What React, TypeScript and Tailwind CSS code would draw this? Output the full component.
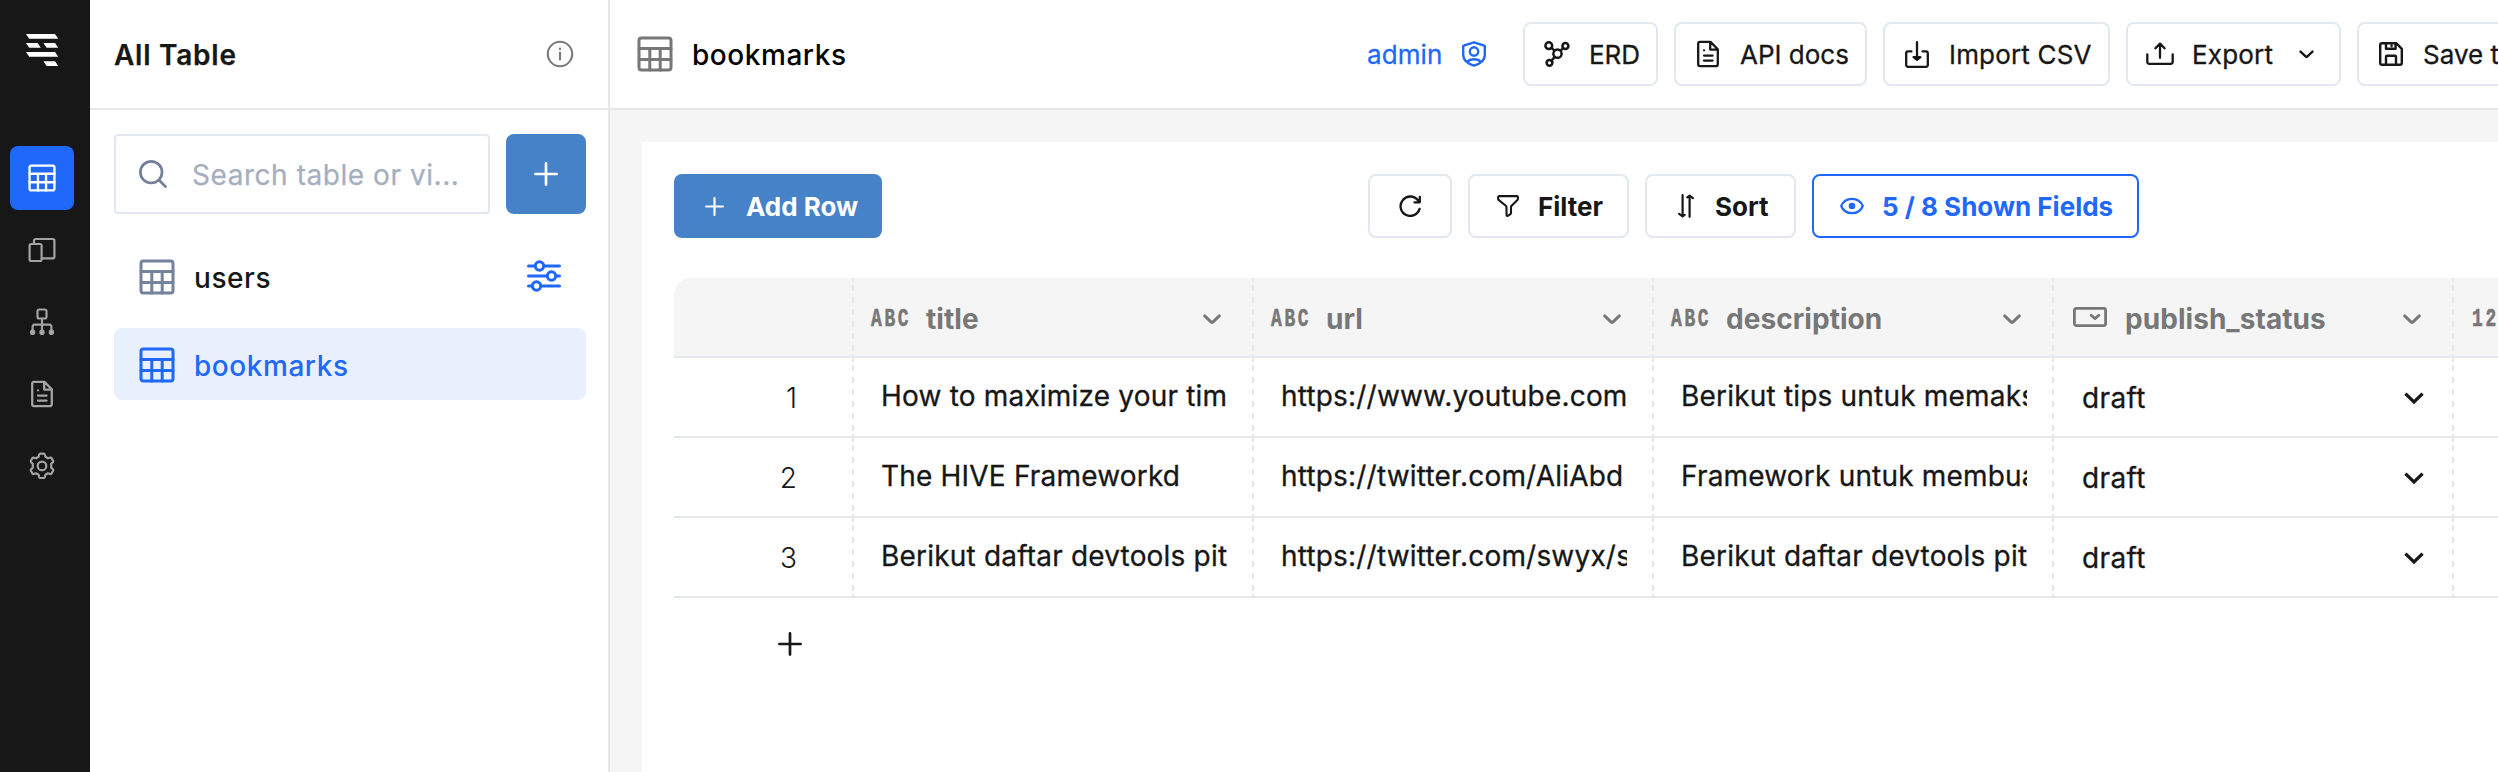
import type { ReactNode } from "react";

type IconProps = { className?: string };

const stroke = { fill: "none", stroke: "currentColor", strokeLinecap: "round", strokeLinejoin: "round" } as const;

const LogoIcon = () => (
  <svg className="h-8 w-[33px]" viewBox="0 0 33 32" fill="#fff">
    <path d="M0 0h29l3.2 4.8H3.2zM0 9h11.6l3.2 4.8H3.2zM17.4 9H29l3.2 4.8H20.6zM0 18h29l3.2 4.8H3.2zM17.4 27.2H29l3.2 4.8H20.6z" />
  </svg>
);

const TableIcon = ({ className }: IconProps) => (
  <svg className={className} viewBox="0 0 36 36" {...stroke} strokeWidth="3">
    <rect x="2" y="2" width="32" height="32" rx="2.5" />
    <path d="M2 12.5h32M2 23.5h32M12.8 12.5V34M23.2 12.5V34" />
  </svg>
);

const DevicesIcon = ({ className }: IconProps) => (
  <svg className={className} viewBox="0 0 28 28" {...stroke} strokeWidth="2.2">
    <rect x="1.6" y="8" width="12" height="17" rx="1.8" />
    <path d="M6 8V4.7A1.7 1.7 0 0 1 7.7 3h17a1.7 1.7 0 0 1 1.7 1.7v16a1.7 1.7 0 0 1-1.7 1.7H14" />
  </svg>
);

const TreeIcon = ({ className }: IconProps) => (
  <svg className={className} viewBox="0 0 28 28" {...stroke} strokeWidth="2.2">
    <rect x="9.5" y="1.5" width="9" height="9" rx="1.8" />
    <path d="M14 10.5v13M4.600 23.500v-5a1.800 1.800 0 0 1 1.800-1.800h15.200a1.800 1.800 0 0 1 1.800 1.800v5" />
    <ellipse cx="4.6" cy="24.3" rx="1.6" ry="1.7" fill="currentColor" />
    <ellipse cx="14" cy="24.3" rx="1.6" ry="1.7" fill="currentColor" />
    <ellipse cx="23.4" cy="24.3" rx="1.6" ry="1.7" fill="currentColor" />
  </svg>
);

const DocIcon = ({ className }: IconProps) => (
  <svg className={className} viewBox="0 0 28 28" {...stroke} strokeWidth="2.3">
    <path d="M16.5 1.9H6a1.8 1.8 0 0 0-1.8 1.8v20.6A1.8 1.8 0 0 0 6 26.1h16a1.8 1.8 0 0 0 1.8-1.8V9.200zM16.2 2.400v7.200h7.300M10 20.600h8.600M10 15.600h8.600M10 10.300h.1" />
  </svg>
);

const GearIcon = ({ className }: IconProps) => (
  <svg className={className} viewBox="0 0 28 28" {...stroke} strokeWidth="2.2">
    <path d="M12.400 1.600h3.200c.7 0 1 .3 1.200.9l.6 2.300 2.500 1.500 2.300-.7c.6-.2 1.100 0 1.400.5l1.500 2.600c.3.600.3 1.100-.2 1.500l-1.700 1.700v3.700l1.700 1.700c.5.500.5 1 .2 1.500l-1.500 2.600c-.3.600-.8.700-1.400.6l-2.300-.7-2.500 1.400-.6 2.400c-.2.600-.5.900-1.200.9h-3.200c-.7 0-1-.3-1.200-.9l-.6-2.400-2.500-1.400-2.300.7c-.6.100-1.100 0-1.400-.6l-1.500-2.600c-.3-.5-.3-1 .2-1.500l1.700-1.700v-3.700l-1.700-1.700c-.5-.4-.5-.9-.2-1.500l1.500-2.600c.3-.5.8-.7 1.400-.5l2.300.7 2.500-1.500.6-2.300c.2-.6.5-.9 1.200-.9z" />
    <circle cx="14" cy="13.9" r="4.3" />
  </svg>
);

const InfoIcon = ({ className }: IconProps) => (
  <svg className={className} viewBox="0 0 28 28" {...stroke} strokeWidth="2.1">
    <circle cx="14" cy="14" r="12.2" />
    <path d="M14 12.5v7" />
    <circle cx="14" cy="8.7" r=".6" fill="currentColor" strokeWidth="1.2" />
  </svg>
);

const SearchIcon = ({ className }: IconProps) => (
  <svg className={className} viewBox="0 0 28 28" {...stroke} strokeWidth="2.7">
    <circle cx="12.2" cy="12.2" r="10.8" />
    <path d="M20.2 20.2l6.3 6.400" />
  </svg>
);

const PlusIcon = ({ className }: IconProps) => (
  <svg className={className} viewBox="0 0 24 24" {...stroke} strokeWidth="2.7">
    <path d="M12 1.400v21.200M1.400 12h21.200" />
  </svg>
);

const SlidersIcon = ({ className }: IconProps) => (
  <svg className={className} viewBox="0 0 34 32" {...stroke} strokeWidth="3">
    <path d="M1.500 6H8M17 6h15.500M1.500 16H20M29 16h3.500M1.500 26H5M14 26h18.500" />
    <circle cx="12.500" cy="6" r="4.2" />
    <circle cx="24.500" cy="16" r="4.2" />
    <circle cx="9.500" cy="26" r="4.2" />
  </svg>
);

const ShieldIcon = ({ className }: IconProps) => (
  <svg className={className} viewBox="0 0 24 26" {...stroke} strokeWidth="2.4">
    <path d="M12 1.300L22.300 4.700a.7.700 0 0 1 .5.700V14c0 5.500-5 8.800-10.800 10.700C6.200 22.800 1.200 19.500 1.200 14V5.400a.7.700 0 0 1 .5-.7z" />
    <circle cx="12" cy="10.500" r="4.2" />
    <path d="M5.600 20.500c2.800-3 10-3 12.800 0" />
  </svg>
);

const MoleculeIcon = ({ className }: IconProps) => (
  <svg className={className} viewBox="0 0 26 26" {...stroke} strokeWidth="2.5">
    <circle cx="4.800" cy="4.700" r="3.4" />
    <circle cx="21.400" cy="5" r="3" />
    <circle cx="13.500" cy="12.700" r="4.1" />
    <circle cx="5.500" cy="21.800" r="2.9" />
    <path d="M7.500 6.800l3 2.800M16.500 9.600l2.700-2.500M10.700 15.900l-3.200 3.800" />
  </svg>
);

const ImportIcon = ({ className }: IconProps) => (
  <svg className={className} viewBox="0 0 24 27" {...stroke} strokeWidth="2.3">
    <path d="M6.500 10.300H3a1.800 1.800 0 0 0-1.800 1.800V24A1.800 1.800 0 0 0 3 25.800h18a1.800 1.800 0 0 0 1.800-1.800V12.100a1.800 1.800 0 0 0-1.800-1.800h-3.500M12 1.200v17" />
    <path d="M8.600 16.200L12 18.800l3.400-2.600z" fill="currentColor" />
  </svg>
);

const ExportIcon = ({ className }: IconProps) => (
  <svg className={className} viewBox="0 0 28 24" {...stroke} strokeWidth="2.3">
    <path d="M1.300 12.300V20a1.800 1.800 0 0 0 1.800 1.800h21.800a1.800 1.800 0 0 0 1.800-1.800v-7.700M14 15.800V2M9.400 6.200L14 1.600l4.600 4.600" />
  </svg>
);

const SaveIcon = ({ className }: IconProps) => (
  <svg className={className} viewBox="0 0 24 24" {...stroke} strokeWidth="2.4">
    <path d="M17.200 1.200H3a1.800 1.800 0 0 0-1.800 1.800v18A1.800 1.800 0 0 0 3 22.800h18a1.800 1.800 0 0 0 1.800-1.800V6.800zM7 22.600V14.700a1 1 0 0 1 1-1h8a1 1 0 0 1 1 1v7.900M7 1.400V6.700h9.600V1.400M12.600 3.600v.5" />
  </svg>
);

const RefreshIcon = ({ className }: IconProps) => (
  <svg className={className} viewBox="0 0 22 22" {...stroke} strokeWidth="2.3">
    <path d="M20.600 13.900A9.700 9.700 0 1 1 19 5.300l1.200 1.500M20.800 1.800v5.500h-5.300" />
  </svg>
);

const FunnelIcon = ({ className }: IconProps) => (
  <svg className={className} viewBox="0 0 22 22" {...stroke} strokeWidth="2.1">
    <path d="M2.200 1.100h17.600c.6 0 1.100.5 1.100 1.100v1.500c0 .5-.2.900-.5 1.200l-6 6.100c-.3.300-.4.600-.4 1v6.100c0 .4-.2.800-.5 1l-2.300 1.600c-.8.500-1.700 0-1.700-.9v-7.800c0-.4-.2-.7-.4-1L1.600 4.900c-.3-.3-.5-.7-.5-1.200v-1.500c0-.6.500-1.100 1.100-1.100z" />
  </svg>
);

const SortIcon = ({ className }: IconProps) => (
  <svg className={className} viewBox="0 0 16 24" {...stroke} strokeWidth="2.2">
    <path d="M4.600 1.200v21M1.200 19.800l3.400 2.700 2-1.600M11.600 22.800V1.800M9.300 3.400l2.300-1.800 3.300 2.500" />
  </svg>
);

const EyeIcon = ({ className }: IconProps) => (
  <svg className={className} viewBox="0 0 24 18" {...stroke} strokeWidth="2.2">
    <path d="M1.200 9C3 4.400 7 1.800 12 1.800S21 4.400 22.800 9C21 13.600 17 16.200 12 16.200S3 13.600 1.200 9z" />
    <circle cx="12" cy="9" r="3.3" fill="currentColor" stroke="none" />
  </svg>
);

const ChevronIcon = ({ className }: IconProps) => (
  <svg className={className} viewBox="0 0 18 11" {...stroke} strokeWidth="2.9">
    <path d="M1.700 1.900l6.500 6.200q.8.700 1.600 0l6.500-6.200" />
  </svg>
);

const SelectChevronIcon = ({ className }: IconProps) => (
  <svg className={className} viewBox="0 0 20 13" fill="none" stroke="currentColor" strokeWidth="3.2">
    <path d="M1.400 1.700L10 10l8.600-8.300" />
  </svg>
);

const DropdownIcon = ({ className }: IconProps) => (
  <svg className={className} viewBox="0 0 34 20" {...stroke} strokeWidth="2.8">
    <rect x="1.400" y="1.400" width="31.200" height="17.200" rx="2" />
    <path d="M18.200 8.200l3.800 3.400 3.800-3.400" />
  </svg>
);

const railItems = [
  { id: "tables", icon: <TableIcon className="h-7 w-7" />, active: true },
  { id: "devices", icon: <DevicesIcon className="h-7 w-7" />, active: false },
  { id: "tree", icon: <TreeIcon className="h-7 w-7" />, active: false },
  { id: "docs", icon: <DocIcon className="h-7 w-7" />, active: false },
  { id: "settings", icon: <GearIcon className="h-7 w-7" />, active: false },
];

function Rail() {
  return (
    <nav className="flex w-[90px] shrink-0 flex-col bg-[#171717] pt-[34px]">
      <div className="pl-[26px]">
        <LogoIcon />
      </div>
      <div className="mt-20 ml-2.5 flex w-16 flex-col gap-2">
        {railItems.map((item) => (
          <button
            key={item.id}
            className={
              item.active
                ? "flex h-16 w-16 items-center justify-center rounded-lg bg-[#1f68fa] text-white"
                : "flex h-16 w-16 items-center justify-center text-[#a3a3a3]"
            }
          >
            {item.icon}
          </button>
        ))}
      </div>
    </nav>
  );
}

function SidePanel() {
  return (
    <aside className="flex w-[520px] shrink-0 flex-col border-r-2 border-[#e5e7eb] bg-white">
      <header className="flex h-[110px] items-center justify-between border-b-2 border-[#e8e8e8] pr-[34px] pl-6">
        <h1 className="pt-0.5 text-[28px] leading-9 font-semibold tracking-[0.75px] text-[#171717] [-webkit-text-stroke:0.25px]">All Table</h1>
        <InfoIcon className="h-7 w-7 text-[#7a7a7a]" />
      </header>
      <div className="flex gap-4 pt-6 pr-[22px] pl-6">
        <div className="flex h-20 w-[376px] items-center rounded border-2 border-[#e2e8f0] pl-[23px]">
          <SearchIcon className="h-7 w-7 text-[#718096]" />
          <span className="ml-[25px] pt-0.5 text-[28px] leading-9 tracking-[0.55px] text-[#a5afc0] [-webkit-text-stroke:0.25px]">Search table or vi...</span>
        </div>
        <button className="flex h-20 w-20 items-center justify-center rounded-lg bg-[#4682c8] text-white">
          <PlusIcon className="h-6 w-6" />
        </button>
      </div>
      <ul className="flex flex-col gap-4 pt-[26px] pr-[22px] pl-6 text-[28px] leading-9 font-medium tracking-[0.55px]">
        <li className="flex h-[72px] items-center rounded-lg pr-[25px] pl-[25px] text-[#171717]">
          <TableIcon className="mt-0.5 h-9 w-9 text-[#74829b]" />
          <span className="ml-[19px] flex-1 pt-1">users</span>
          <SlidersIcon className="h-8 w-[34px] text-[#1f68fa]" />
        </li>
        <li className="flex h-[72px] items-center rounded-lg bg-[#e8effd] pl-[25px] text-[#1f68fa]">
          <TableIcon className="mt-0.5 h-9 w-9" />
          <span className="ml-[19px] pt-1">bookmarks</span>
        </li>
      </ul>
    </aside>
  );
}

type HeaderButtonProps = { className: string; icon: ReactNode; label: string; children?: ReactNode };

function HeaderButton({ className, icon, label, children }: HeaderButtonProps) {
  return (
    <button className={"flex h-16 shrink-0 items-center rounded-lg border-2 border-[#e2e8f0] pl-[18px] text-[26px] leading-8 text-[#171717] " + className}>
      <span className="mr-[18px] flex w-7 shrink-0 justify-center">{icon}</span>
      <span className="pt-0.5 whitespace-nowrap [-webkit-text-stroke:0.3px]">{label}</span>
      {children}
    </button>
  );
}

function TopBar() {
  return (
    <header className="flex h-[110px] shrink-0 items-center border-b-2 border-[#e8e8e8] bg-white pl-[27px]">
      <TableIcon className="h-9 w-9 shrink-0 text-[#777]" />
      <span className="ml-[19px] pt-0.5 text-[28px] leading-9 font-medium tracking-[0.55px] text-black">bookmarks</span>
      <div className="ml-auto flex w-[1132px] shrink-0 items-center gap-4">
        <span className="flex w-[141px] shrink-0 items-center text-[26px] leading-8 text-[#1f68fa]">
          <span className="flex-1 pt-0.5 pl-px tracking-[0.1px] [-webkit-text-stroke:0.3px]">admin</span>
          <ShieldIcon className="mr-[21px] h-[26px] w-6" />
        </span>
        <HeaderButton className="w-[135px] tracking-[-0.1px]" icon={<MoleculeIcon className="h-[26px] w-[26px]" />} label="ERD" />
        <HeaderButton className="w-[193px]" icon={<DocIcon className="h-7 w-7" />} label="API docs" />
        <HeaderButton className="w-[227px] tracking-[0.18px]" icon={<ImportIcon className="h-[27px] w-6" />} label="Import CSV" />
        <HeaderButton className="w-[215px] tracking-[0.18px]" icon={<ExportIcon className="h-6 w-7" />} label="Export">
          <ChevronIcon className="mr-[25px] ml-auto h-[9px] w-[15px]" />
        </HeaderButton>
        <HeaderButton className="w-[300px]" icon={<SaveIcon className="h-6 w-6" />} label="Save to" />
      </div>
    </header>
  );
}

function Toolbar() {
  return (
    <div className="flex h-16 shrink-0 text-[26px] leading-8 font-bold text-[#171717]">
      <button className="flex w-52 items-center rounded-lg bg-[#4682c8] pl-[31px] text-white">
        <PlusIcon className="h-[19px] w-[19px]" />
        <span className="ml-[22px] pt-0.5">Add Row</span>
      </button>
      <div className="ml-[486px] flex gap-4">
        <button className="flex w-[84px] items-center justify-center rounded-lg border-2 border-[#e2e8f0]">
          <RefreshIcon className="h-[22px] w-[22px]" />
        </button>
        <button className="flex w-[161px] items-center rounded-lg border-2 border-[#e2e8f0] pl-[27px]">
          <FunnelIcon className="h-[22px] w-[22px]" />
          <span className="ml-[19px] pt-0.5">Filter</span>
        </button>
        <button className="flex w-[151px] items-center rounded-lg border-2 border-[#e2e8f0] pl-[31px]">
          <SortIcon className="h-6 w-4" />
          <span className="ml-[21px] pt-0.5">Sort</span>
        </button>
        <button className="flex w-[327px] items-center rounded-lg border-2 border-[#1f68fa] pl-[26px] text-[#1f68fa]">
          <EyeIcon className="h-[18px] w-6" />
          <span className="ml-[18px] pt-0.5">5 / 8 Shown Fields</span>
        </button>
      </div>
    </div>
  );
}

const TypeGlyph = ({ children }: { children: ReactNode }) => (
  <span className="inline-block w-10 origin-left scale-x-[0.85] scale-y-[1.25] font-['Liberation_Mono',monospace] text-[21px] leading-6 font-bold tracking-[3.2px] [-webkit-text-stroke:0.5px]">{children}</span>
);

const columns = [
  { name: "title", type: "abc" },
  { name: "url", type: "abc" },
  { name: "description", type: "abc" },
  { name: "publish_status", type: "select" },
];

const rows = [
  ["How to maximize your time", "https://www.youtube.com", "Berikut tips untuk memaks", "draft"],
  ["The HIVE Frameworkd", "https://twitter.com/AliAbd", "Framework untuk membua", "draft"],
  ["Berikut daftar devtools pit", "https://twitter.com/swyx/s", "Berikut daftar devtools pit", "draft"],
];

const Separator = () => (
  <i className="-mb-0.5 block w-0.5 shrink-0 self-stretch bg-[linear-gradient(to_bottom,#e5e7eb_0_4px,transparent_4px_76px,#e5e7eb_76px_80px),repeating-linear-gradient(to_bottom,#e5e7eb_0_1px,transparent_1px_7px,#e5e7eb_7px_12px)]" />
);

function DataTable() {
  return (
    <div className="mt-10 text-[28px] leading-9">
      <div className="flex h-20 rounded-tl-[16px] border-b-2 border-[#e2e8ec] bg-[#f5f5f5] font-bold text-[#777]">
        <div className="w-[178px] shrink-0" />
        <Separator />
        {columns.map((column) => (
          <div key={column.name} className="flex w-[400px] shrink-0">
            <div className="flex flex-1 items-center pt-1 pr-[31px] pl-[17px]">
              {column.type === "abc" ? (
                <span className="mt-0.5 mr-[15px] flex">
                  <TypeGlyph>ABC</TypeGlyph>
                </span>
              ) : (
                <DropdownIcon className="-mt-1 mr-[18px] ml-0.5 h-5 w-[34px]" />
              )}
              <span className="flex-1 tracking-[0.05px]">{column.name}</span>
              <ChevronIcon className="h-[11px] w-[18px]" />
            </div>
            <Separator />
          </div>
        ))}
        <div className="flex items-center pt-1.5 pl-[18px]">
          <TypeGlyph>123</TypeGlyph>
        </div>
      </div>
      {rows.map((row, index) => (
        <div key={row[1]} className="flex h-20 border-b-2 border-[#e2e8ec] text-[#171717]">
          <div className="flex w-[178px] shrink-0 items-center justify-end pt-0.5 pr-[55px] font-light">{index + 1}</div>
          <Separator />
          {row.slice(0, 3).map((cell, i) => (
            <div key={i} className="flex w-[400px] shrink-0">
              <div className="flex flex-1 items-center pb-0.5 pl-[27px]">
                <div className="w-[346px] overflow-hidden tracking-[0.19px] whitespace-nowrap [-webkit-text-stroke:0.3px]">{cell}</div>
              </div>
              <Separator />
            </div>
          ))}
          <div className="flex w-[400px] shrink-0">
            <div className="flex flex-1 items-center justify-between pt-0.5 pr-7 pl-7">
              <span className="tracking-[0.35px] [-webkit-text-stroke:0.3px]">{row[3]}</span>
              <SelectChevronIcon className="h-[13px] w-5" />
            </div>
            <Separator />
          </div>
        </div>
      ))}
      <button className="mt-[34px] ml-[104px] flex text-[#171717]">
        <PlusIcon className="h-6 w-6" />
      </button>
    </div>
  );
}

export default function App() {
  return (
    <div className="flex h-[772px] w-[2498px] overflow-hidden bg-white font-['Inter',sans-serif]">
      <Rail />
      <SidePanel />
      <main className="flex min-w-0 flex-1 flex-col bg-[#f5f5f5]">
        <TopBar />
        <section className="mt-8 ml-8 flex flex-1 flex-col overflow-hidden bg-white pt-8 pl-8">
          <Toolbar />
          <DataTable />
        </section>
      </main>
    </div>
  );
}
